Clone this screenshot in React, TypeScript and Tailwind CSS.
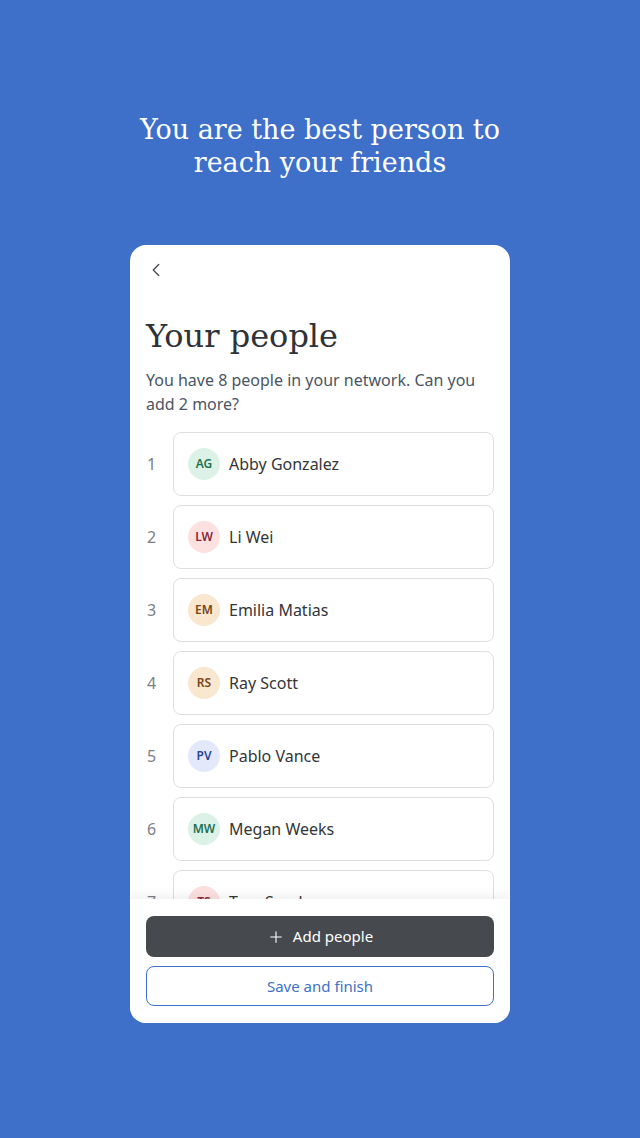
import React from "react";
import { ChevronLeft, Plus } from "lucide-react";

type Person = {
  name: string;
  initials: string;
  bg: string;
  fg: string;
};

const people: Person[] = [
  { name: "Abby Gonzalez", initials: "AG", bg: "bg-[#dcf2e7]", fg: "text-[#1d7052]" },
  { name: "Li Wei", initials: "LW", bg: "bg-[#fde1e1]", fg: "text-[#8c2638]" },
  { name: "Emilia Matias", initials: "EM", bg: "bg-[#f9e7cf]", fg: "text-[#7a4516]" },
  { name: "Ray Scott", initials: "RS", bg: "bg-[#f9e7cf]", fg: "text-[#7a4516]" },
  { name: "Pablo Vance", initials: "PV", bg: "bg-[#e3e9fb]", fg: "text-[#27449a]" },
  { name: "Megan Weeks", initials: "MW", bg: "bg-[#dcf2e7]", fg: "text-[#1d7052]" },
  { name: "Tara Sanders", initials: "TS", bg: "bg-[#fde1e1]", fg: "text-[#8c2638]" },
];

const PersonRow = ({ person, index }: { person: Person; index: number }) => {
  return (
    <li className="flex items-center">
      <span className="w-[27px] shrink-0 pl-[1px] text-base text-[#7b7f85]">{index}</span>
      <div className="flex h-16 flex-1 items-center gap-[9px] rounded-lg border border-[#dcdee1] bg-white pl-[14px]">
        <div
          className={`flex h-8 w-8 items-center justify-center rounded-full text-[12px] font-semibold ${person.bg} ${person.fg}`}
        >
          {person.initials}
        </div>
        <span className="text-base text-[#33363a]">{person.name}</span>
      </div>
    </li>
  );
};

export default function App() {
  return (
    <div
      className="flex min-h-[1138px] w-full flex-col items-center bg-[#3e6fc9]"
      style={{ fontFamily: '"Noto Sans", "Open Sans", sans-serif' }}
    >
      <h2 className="mt-[113px] text-center font-['DejaVu_Serif',serif] text-[27px] font-light leading-[33px] text-white">
        You are the best person to
        <br />
        reach your friends
      </h2>

      <div className="mt-[66px] flex h-[778px] w-[380px] flex-col overflow-hidden rounded-2xl bg-white">
        <div className="flex min-h-0 flex-1 flex-col px-4 pt-[14px]">
          <button className="flex h-6 w-6 items-center justify-start text-[#4a4f56]">
            <ChevronLeft size={22} strokeWidth={1.5} className="-ml-[1px]" />
          </button>
          <h1 className="mt-[35px] font-['DejaVu_Serif',serif] text-[32px] leading-[40px] text-[#2f3236]">
            Your people
          </h1>
          <p className="mt-[12px] text-base leading-6 text-[#4b5563]">
            You have 8 people in your network. Can you add 2 more?
          </p>
          <ul className="mt-[16px] flex flex-col gap-[9px]">
            {people.map((person, i) => (
              <PersonRow key={person.name} person={person} index={i + 1} />
            ))}
          </ul>
        </div>

        <div className="relative z-10 flex flex-col gap-[9px] bg-white px-4 pb-[17px] pt-[17px] shadow-[0_-4px_10px_rgba(0,0,0,0.06)]">
          <button className="flex h-[41px] items-center justify-center gap-2 rounded-lg bg-[#464a4f] text-[15px] text-white">
            <Plus size={18} strokeWidth={1.5} />
            Add people
          </button>
          <button className="flex h-[40px] items-center justify-center rounded-lg border border-[#3e6fc9] text-[15px] text-[#3e6fc9]">
            Save and finish
          </button>
        </div>
      </div>
    </div>
  );
}
